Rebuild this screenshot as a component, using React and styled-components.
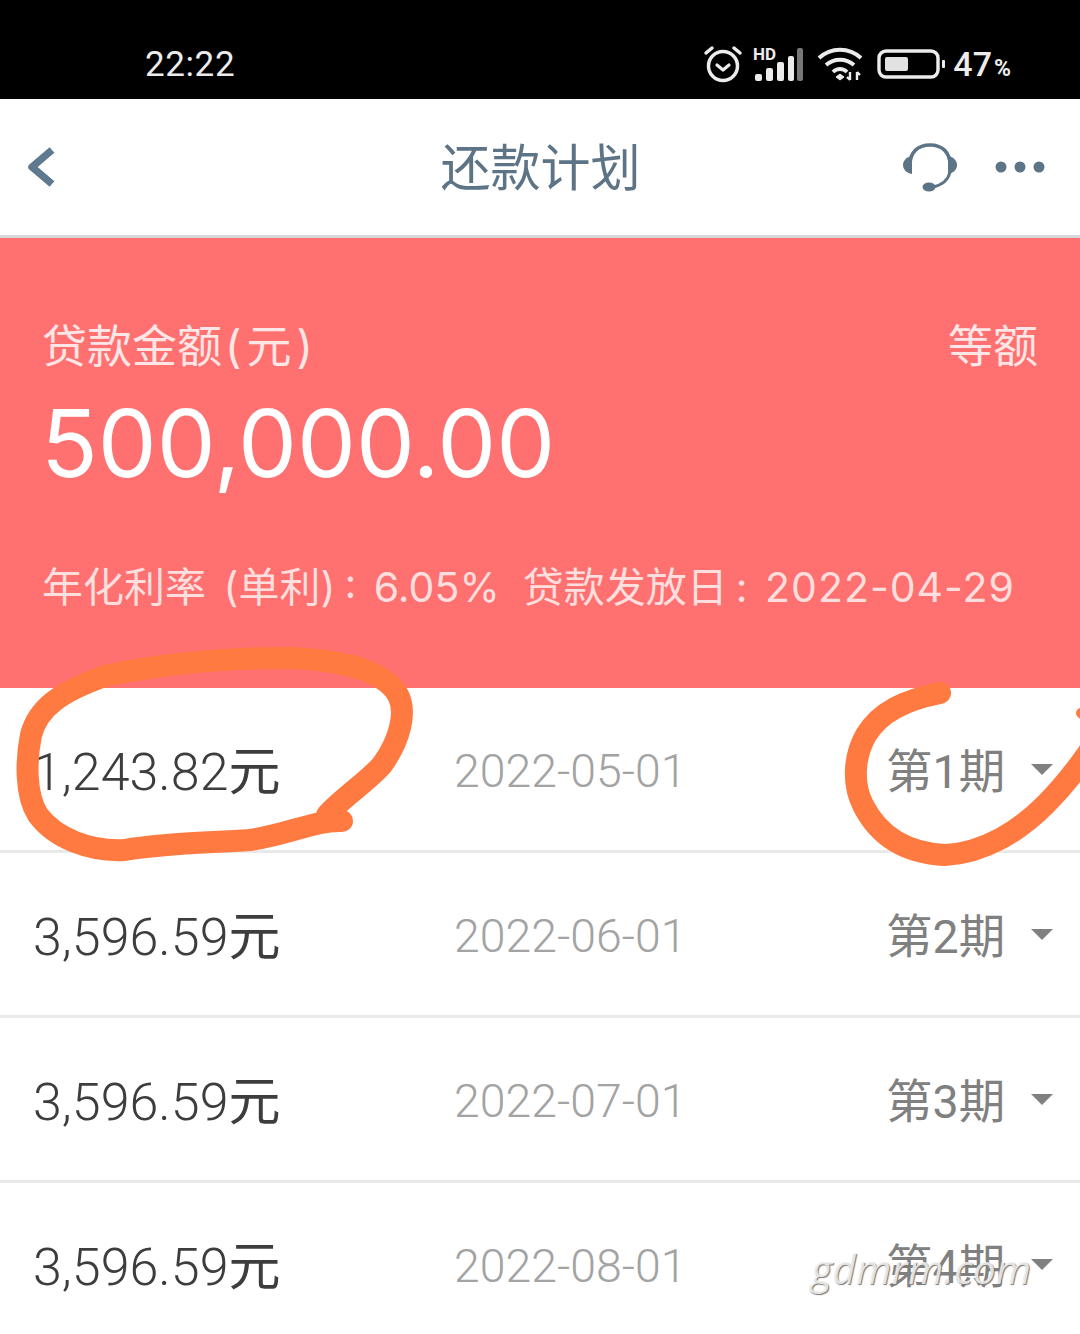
import styled, { createGlobalStyle } from 'styled-components';

const CJK = `Roboto, "Noto Sans CJK SC", sans-serif`;
const WIDE = `Inter, "Noto Sans CJK SC", sans-serif`;

const GlobalStyle = createGlobalStyle`
  html, body {
    margin: 0;
    padding: 0;
    background: #fff;
  }
  * {
    box-sizing: border-box;
  }
`;

const Page = styled.div`
  position: relative;
  width: 1080px;
  height: 1334px;
  overflow: hidden;
  font-family: ${CJK};
`;

const StatusBar = styled.div`
  height: 99px;
  background: #000;
  color: #ececec;
  display: flex;
  align-items: center;
  justify-content: space-between;
  padding: 29px 69px 0 145px;
`;

const Clock = styled.span`
  font-size: 35px;
  font-weight: 400;
  letter-spacing: 0.6px;
`;

const StatusIcons = styled.div`
  display: flex;
  align-items: center;
  gap: 14px;
`;

const Battery = styled.span`
  font-size: 34px;
  font-weight: 500;
  margin-left: -6px;
  small {
    font-size: 23px;
    font-weight: 700;
    margin-left: 2px;
  }
`;

const AlarmSvg = styled.svg`
  margin-right: -4px;
`;

const SignalSvg = styled.svg`
  margin-top: -8px;
`;

const NavBar = styled.div`
  height: 139px;
  display: flex;
  align-items: center;
  justify-content: space-between;
  padding: 0 35px 0 26px;
  border-bottom: 3px solid #d8d8d8;
  position: relative;
`;

const NavTitle = styled.div`
  position: absolute;
  left: 1px;
  right: 0;
  top: 40px;
  text-align: center;
  font-size: 50px;
  line-height: 60px;
  font-weight: 400;
  color: #5d7486;
`;

const NavActions = styled.div`
  display: flex;
  align-items: center;
  gap: 38px;
`;

const Summary = styled.div`
  height: 450px;
  background: #ff7070;
  color: #fff;
  padding: 81px 42px 0;
  font-family: ${WIDE};
`;

const SummaryTop = styled.div`
  display: flex;
  justify-content: space-between;
  font-size: 45px;
  line-height: 56px;
  font-weight: 400;
  color: #ffe6e6;
`;

const Unit = styled.span`
  margin-left: 3px;
  letter-spacing: 5px;
`;

const Amount = styled.div`
  font-size: 93.5px;
  line-height: 107px;
  font-weight: 400;
  margin: 15px 0 0 -1px;
`;

const SummaryInfo = styled.div`
  display: flex;
  gap: 23px;
  margin-top: 64px;
  font-size: 41px;
  line-height: 52px;
  font-weight: 400;
  word-spacing: 6px;
  color: #ffdede;
  white-space: nowrap;
`;

const Colon = styled.span`
  margin-left: ${(props) => props.$gap}px;
`;

const SpacedDate = styled.span`
  letter-spacing: 1px;
`;

const Row = styled.div`
  height: 165px;
  display: grid;
  grid-template-columns: 421px 434px 1fr;
  align-items: center;
  padding: 0 27px 0 33px;
  border-bottom: 3px solid #e9e9e9;
  &:last-child {
    border-bottom: none;
  }
`;

const Money = styled.div`
  font-size: 52px;
  font-weight: 300;
  color: #3d3d3d;
  white-space: nowrap;
  padding-bottom: 4px;
  b {
    font-weight: 400;
  }
`;

const DateText = styled.div`
  font-size: 46.4px;
  font-weight: 300;
  color: #a3a3a3;
  padding-top: 4px;
`;

const Period = styled.div`
  display: flex;
  align-items: center;
  justify-content: space-between;
  margin-left: -2px;
  font-size: 46.5px;
  font-weight: 400;
  color: #808080;
`;

const PeriodLabel = styled.span`
  padding-bottom: 4px;
`;

const Caret = styled.span`
  width: 0;
  height: 0;
  border-left: 11px solid transparent;
  border-right: 11px solid transparent;
  border-top: 11px solid #808080;
`;

const Scribble = styled.svg`
  position: absolute;
  left: 0;
  top: 0;
  pointer-events: none;
`;

const Watermark = styled.div`
  position: absolute;
  left: 811px;
  top: 1239px;
  font-family: "Open Sans", sans-serif;
  font-style: italic;
  font-size: 40.5px;
  line-height: 60px;
  letter-spacing: 0.3px;
  color: rgba(240, 240, 240, 0.88);
  text-shadow: 1px 1px 1px #777;
`;

const rows = [
  { money: '1,243.82', date: '2022-05-01', period: '第1期' },
  { money: '3,596.59', date: '2022-06-01', period: '第2期' },
  { money: '3,596.59', date: '2022-07-01', period: '第3期' },
  { money: '3,596.59', date: '2022-08-01', period: '第4期' },
];

const AlarmIcon = () => (
  <AlarmSvg width="40" height="40" viewBox="0 0 40 40" fill="none" stroke="#ececec" strokeLinecap="round">
    <circle cx="20" cy="22" r="14.5" strokeWidth="3.5" />
    <path d="M14 21l6 5 6-5" strokeWidth="3.2" strokeLinejoin="round" />
    <path d="M3 9l6-5M37 9l-6-5" strokeWidth="3.5" />
  </AlarmSvg>
);

const SignalIcon = () => (
  <SignalSvg width="50" height="44" viewBox="0 -8 50 44" fill="#ececec">
    <text x="0" y="14" fontFamily="Roboto, sans-serif" fontWeight="700" fontSize="17">HD</text>
    <rect x="2" y="28" width="7" height="7" rx="2" />
    <rect x="13" y="22" width="7" height="13" rx="2" />
    <rect x="24" y="16" width="7" height="19" rx="2" />
    <rect x="35" y="10" width="6" height="25" rx="2" />
    <rect x="44" y="2" width="6" height="33" rx="2" fill="#777" />
  </SignalSvg>
);

const WifiIcon = () => (
  <svg width="46" height="36" viewBox="0 0 46 36" fill="none" stroke="#ececec" strokeWidth="3.8">
    <path d="M2 12C14 1 32 1 44 12" />
    <path d="M9 19C17 12 29 12 37 19" />
    <path d="M16 26C20 22 26 22 30 26" />
    <path d="M19 31l4-3 4 3-4 3z" fill="#ececec" strokeWidth="1" />
    <path d="M33 26v8M30 31l3 3M40 34v-8M43 29l-3-3" strokeWidth="2.4" />
  </svg>
);

const BatteryIcon = () => (
  <svg width="68" height="30" viewBox="0 0 68 30" fill="none">
    <rect x="2" y="2" width="59" height="26" rx="7" stroke="#ececec" strokeWidth="3.4" />
    <rect x="8" y="8" width="23" height="14" rx="2" fill="#e2e2e2" />
    <rect x="65" y="11" width="3" height="8" rx="1" fill="#ececec" />
  </svg>
);

const BackIcon = () => (
  <svg width="32" height="44" viewBox="0 0 32 44" fill="none" stroke="#5f7a8e" strokeWidth="7.5" strokeLinejoin="round">
    <path d="M26 5L6 22l20 17" />
  </svg>
);

const HeadsetIcon = () => (
  <svg width="54" height="50" viewBox="0 0 54 50" fill="#5d7486">
    <path d="M7 23C7 10 15 3 27 3s20 7 20 20" fill="none" stroke="#5d7486" strokeWidth="3.5" />
    <path d="M9 14v18C3 31 0 27 0 23s3-8 9-9z" />
    <path d="M45 14v18c6-1 9-5 9-9s-3-8-9-9z" />
    <path d="M47 30c-2 9-8 13-17 15" fill="none" stroke="#5d7486" strokeWidth="3" />
    <ellipse cx="26" cy="45" rx="6.5" ry="4.5" />
  </svg>
);

const MoreIcon = () => (
  <svg width="50" height="12" viewBox="0 0 50 12" fill="#5d7486">
    <circle cx="6" cy="6" r="5.5" />
    <circle cx="25" cy="6" r="5.5" />
    <circle cx="44" cy="6" r="5.5" />
  </svg>
);

const App = () => (
  <Page>
    <GlobalStyle />
    <StatusBar>
      <Clock>22:22</Clock>
      <StatusIcons>
        <AlarmIcon />
        <SignalIcon />
        <WifiIcon />
        <BatteryIcon />
        <Battery>
          47<small>%</small>
        </Battery>
      </StatusIcons>
    </StatusBar>
    <NavBar>
      <BackIcon />
      <NavTitle>还款计划</NavTitle>
      <NavActions>
        <HeadsetIcon />
        <MoreIcon />
      </NavActions>
    </NavBar>
    <Summary>
      <SummaryTop>
        <span>
          贷款金额<Unit>(元)</Unit>
        </span>
        <span>等额</span>
      </SummaryTop>
      <Amount>500,000.00</Amount>
      <SummaryInfo>
        <span>
          年化利率 (单利)<Colon $gap={9}>:</Colon> 6.05%
        </span>
        <span>
          贷款发放日<Colon $gap={8}>:</Colon> <SpacedDate>2022-04-29</SpacedDate>
        </span>
      </SummaryInfo>
    </Summary>
    {rows.map((row) => (
      <Row key={row.period}>
        <Money>
          {row.money}
          <b>元</b>
        </Money>
        <DateText>{row.date}</DateText>
        <Period>
          <PeriodLabel>{row.period}</PeriodLabel>
          <Caret />
        </Period>
      </Row>
    ))}
    {/* hand drawn marks on top of the screenshot */}
    <Scribble width="1080" height="1334" viewBox="0 0 1080 1334" fill="none" stroke="#ff7a40" strokeWidth="22" strokeLinecap="round" strokeLinejoin="round">
      <path d="M342 821C315 820 290 834 250 840C205 843 165 843 125 850C90 852 55 838 38 815C25 795 26 760 31 735C38 708 60 692 105 676C160 664 225 658 290 658C345 660 385 672 398 695C407 712 400 740 382 765C367 782 342 798 327 815" />
      <path d="M940 693C905 700 880 712 866 735C853 758 853 785 863 805C878 835 905 853 945 855C985 853 1020 830 1045 805C1060 790 1075 772 1090 750" />
      <path d="M1081 713L1084 716" strokeWidth="10" />
    </Scribble>
    <Watermark>gdmrm.com</Watermark>
  </Page>
);

export default App;
